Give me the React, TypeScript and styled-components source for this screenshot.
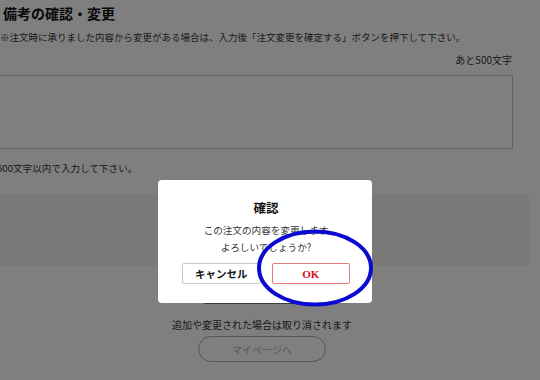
import React from "react";
import styled, { createGlobalStyle } from "styled-components";

const GlobalStyle = createGlobalStyle`
  html, body {
    margin: 0;
    padding: 0;
    background: #ffffff;
    overflow: hidden;
  }
  * {
    box-sizing: border-box;
  }
`;

const jp = `"Noto Sans CJK JP", "Noto Sans", sans-serif`;

//page
const PageS = styled.div`
  position: relative;
  width: 540px;
  height: 380px;
  overflow: hidden;
  background: #ffffff;
  font-family: ${jp};
  color: #333333;
`;

const HeadingS = styled.h2`
  margin: 0;
  padding: 4px 0 0 3px;
  font-size: 14px;
  line-height: 18px;
  font-weight: bold;
  color: #111111;
`;

const NoteS = styled.p`
  margin: 8px 0 0 0;
  font-size: 9.5px;
  line-height: 14px;
  white-space: nowrap;
`;

const CounterS = styled.div`
  margin-top: 9px;
  padding-right: 28px;
  text-align: right;
  font-size: 10px;
  line-height: 14px;
`;

const MemoBoxS = styled.div`
  margin: 8px 0 0 -10px;
  width: 523px;
  height: 74px;
  border: 1px solid #c8c8c8;
  background: #ffffff;
`;

const HintS = styled.p`
  margin: 12px 0 0 -3px;
  font-size: 9.6px;
  line-height: 14px;
  white-space: nowrap;
`;

const BandS = styled.div`
  margin-top: 19px;
  width: 529px;
  height: 72px;
  background: #f2f2f2;
`;

const FooterS = styled.div`
  width: 524px;
  display: flex;
  flex-direction: column;
  align-items: center;
`;

const ConfirmButtonS = styled.div`
  margin-top: 15px;
  width: 120px;
  height: 23px;
  border-radius: 4px;
  border-bottom: 2px solid #777777;
  background: #ffffff;
`;

const CancelNoticeS = styled.p`
  margin: 14px 0 0 0;
  font-size: 10px;
  line-height: 14px;
`;

const MyPageButtonS = styled.button`
  margin-top: 4px;
  width: 128px;
  height: 26px;
  border-radius: 13px;
  border: 1px solid #98b0c6;
  background: #ffffff;
  font-family: ${jp};
  font-size: 10px;
  color: #a9b3bd;
  padding: 0;
`;

//modal
const OverlayS = styled.div`
  position: absolute;
  inset: 0;
  background: rgba(0, 0, 0, 0.5);
`;

const DialogS = styled.div`
  position: absolute;
  left: 158px;
  top: 180px;
  width: 214px;
  height: 123px;
  background: #ffffff;
  border-radius: 4px;
  display: flex;
  flex-direction: column;
  align-items: center;
  padding: 19px 22px 0 24px;
`;

const DialogTitleS = styled.div`
  font-size: 12.5px;
  line-height: 18px;
  font-weight: bold;
  color: #111111;
`;

const DialogTextS = styled.div`
  margin-top: 5px;
  font-size: 9.6px;
  line-height: 17px;
  color: #333333;
  text-align: center;
`;

const ButtonRowS = styled.div`
  margin-top: 7px;
  width: 100%;
  display: flex;
  gap: 11px;
`;

const DialogButtonS = styled.button<{ primary?: boolean }>`
  flex: 1;
  height: 21px;
  padding: 0;
  background: #ffffff;
  border-radius: 2px;
  border: 1px solid ${(props) => (props.primary ? "#e77b7b" : "#c8c8c8")};
  color: ${(props) => (props.primary ? "#d4141e" : "#111111")};
  font-family: ${(props) => (props.primary ? `"Liberation Serif", serif` : jp)};
  font-size: ${(props) => (props.primary ? "11px" : "10.5px")};
  font-weight: bold;
`;

const MarkS = styled.svg`
  position: absolute;
  left: 256px;
  top: 229px;
  width: 118px;
  height: 78px;
`;

export default function App() {
  return (
    <>
      <GlobalStyle />
      <PageS>
        <HeadingS>備考の確認・変更</HeadingS>
        <NoteS>
          ※注文時に承りました内容から変更がある場合は、入力後「注文変更を確定する」ボタンを押下して下さい。
        </NoteS>
        <CounterS>あと500文字</CounterS>
        <MemoBoxS />
        <HintS>500文字以内で入力して下さい。</HintS>
        <BandS />
        <FooterS>
          <ConfirmButtonS />
          <CancelNoticeS>追加や変更された場合は取り消されます</CancelNoticeS>
          <MyPageButtonS>マイページへ</MyPageButtonS>
        </FooterS>

        <OverlayS />
        <DialogS>
          <DialogTitleS>確認</DialogTitleS>
          <DialogTextS>
            この注文の内容を変更します
            <br />
            よろしいでしょうか?
          </DialogTextS>
          <ButtonRowS>
            <DialogButtonS>キャンセル</DialogButtonS>
            <DialogButtonS primary>OK</DialogButtonS>
          </ButtonRowS>
        </DialogS>
        <MarkS viewBox="0 0 118 78">
          <ellipse cx="59" cy="39" rx="56" ry="36.5" fill="none" stroke="#0a0ad0" strokeWidth="4" />
        </MarkS>
      </PageS>
    </>
  );
}
